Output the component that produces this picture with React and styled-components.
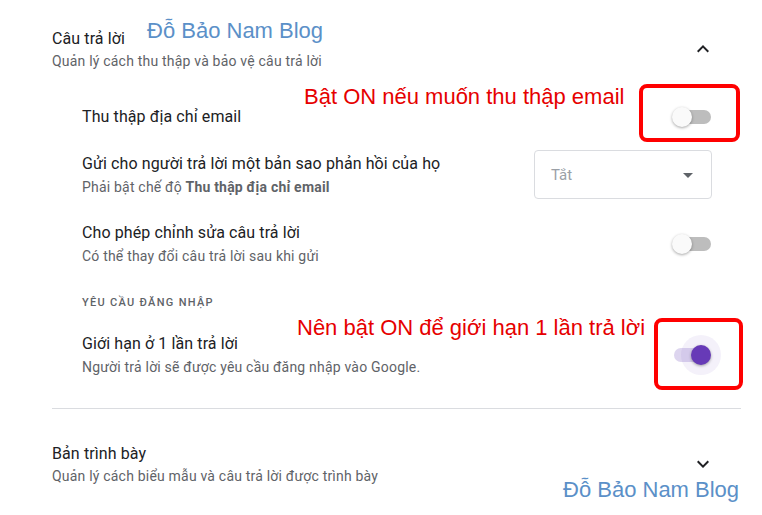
import React from 'react';
import styled, { createGlobalStyle } from 'styled-components';

const GlobalStyle = createGlobalStyle`
  html, body {
    margin: 0;
    padding: 0;
    background: #ffffff;
  }
  body {
    font-family: Roboto, "Noto Sans", Arial, sans-serif;
    color: #202124;
  }
`;

const Page = styled.div`
  position: relative;
  width: 762px;
  height: 515px;
  overflow: hidden;
  background: #ffffff;
`;

const Section = styled.div`
  margin-left: 52px;
  width: 689px;
  padding-top: ${props => props.$padTop}px;
  border-bottom: ${props => props.$divider ? '1px solid #dadce0' : 'none'};
  padding-bottom: ${props => props.$padBottom || 0}px;
`;

const SectionHeader = styled.div`
  display: flex;
  align-items: center;
  justify-content: space-between;
`;

const HeaderText = styled.div`
  display: flex;
  flex-direction: column;
`;

const SectionTitle = styled.div`
  font-size: 16px;
  line-height: 24px;
  letter-spacing: 0.1px;
  color: #202124;
`;

const SectionSub = styled.div`
  font-size: 14px;
  line-height: 20px;
  letter-spacing: 0.2px;
  color: #5f6368;
`;

const ChevronButton = styled.div`
  width: 24px;
  height: 24px;
  margin-right: 26px;
  display: flex;
  align-items: center;
  justify-content: center;
  color: #202124;
`;

const Rows = styled.div`
  margin-left: 30px;
  padding-right: 29px;
  display: flex;
  flex-direction: column;
`;

const Row = styled.div`
  display: flex;
  align-items: center;
  justify-content: space-between;
  min-height: ${props => props.$height}px;
  margin-top: ${props => props.$mt}px;
`;

const RowText = styled.div`
  display: flex;
  flex-direction: column;
`;

const RowTitle = styled.div`
  font-size: 16px;
  line-height: 24px;
  letter-spacing: 0.1px;
  color: #202124;
`;

const RowSub = styled.div`
  font-size: 14px;
  line-height: 20px;
  margin-top: 1px;
  letter-spacing: 0.2px;
  color: #5f6368;

  b {
    font-weight: 700;
    color: #5f6368;
  }
`;

const GroupLabel = styled.div`
  margin-top: ${props => props.$mt}px;
  font-size: 11px;
  line-height: 16px;
  font-weight: 500;
  letter-spacing: 1.3px;
  text-transform: uppercase;
  color: #5f6368;
`;

const Select = styled.div`
  box-sizing: border-box;
  width: 178px;
  height: 49px;
  border: 1px solid #dadce0;
  border-radius: 4px;
  display: flex;
  align-items: center;
  justify-content: space-between;
  padding: 0 18px 0 16px;
  font-size: 15px;
  color: #9aa0a6;
`;

const Caret = styled.span`
  width: 0;
  height: 0;
  border-left: 5px solid transparent;
  border-right: 5px solid transparent;
  border-top: 5px solid #5f6368;
  margin-top: 2px;
`;

const ToggleCell = styled.div`
  position: relative;
  width: 40px;
  height: 40px;
  display: flex;
  align-items: center;
`;

const Track = styled.div`
  position: absolute;
  left: ${props => props.$on ? 2 : 3}px;
  top: 13px;
  width: ${props => props.$on ? 35 : 36}px;
  height: 14px;
  border-radius: 7px;
  background: ${props => props.$on ? '#ddd5ef' : '#bdbdbd'};
`;

const Halo = styled.div`
  position: absolute;
  left: 9px;
  top: 0;
  width: 40px;
  height: 40px;
  border-radius: 50%;
  background: rgba(103, 58, 183, 0.07);
`;

const Thumb = styled.div`
  position: absolute;
  left: ${props => props.$on ? 19 : 0}px;
  top: 10px;
  width: 20px;
  height: 20px;
  border-radius: 50%;
  background: ${props => props.$on ? '#673ab7' : '#fafafa'};
  box-shadow: 0 1px 3px rgba(0, 0, 0, 0.35);
`;

const Highlight = styled.div`
  position: absolute;
  box-sizing: border-box;
  border: 4px solid #ff0000;
  border-radius: 8px;
  pointer-events: none;
`;

const Annotation = styled.div`
  position: absolute;
  font-family: "Liberation Sans", Arial, sans-serif;
  font-size: 22px;
  line-height: 26px;
  color: ${props => props.$blue ? '#5b90c8' : '#e60000'};
  white-space: nowrap;
`;

const Chevron = ({ up }) => (
  <svg width="24" height="24" viewBox="0 0 24 24" fill="currentColor">
    {up ? (
      <path d="M12 8l-6 6 1.41 1.41L12 10.83l4.59 4.58L18 14z" />
    ) : (
      <path d="M16.59 8.59L12 13.17 7.41 8.59 6 10l6 6 6-6z" />
    )}
  </svg>
);

const Toggle = ({ on, box }) => (
  <ToggleCell>
    <Track $on={on} />
    {on && <Halo />}
    <Thumb $on={on} />
    {box && (
      <Highlight
        style={{ left: box.left, top: box.top, width: box.width, height: box.height }}
      />
    )}
  </ToggleCell>
);

export default function App() {
  return (
    <Page>
      <GlobalStyle />

      <Section $padTop={27} $divider $padBottom={31}>
        <SectionHeader>
          <HeaderText>
            <SectionTitle>Câu trả lời</SectionTitle>
            <SectionSub>Quản lý cách thu thập và bảo vệ câu trả lời</SectionSub>
          </HeaderText>
          <ChevronButton>
            <Chevron up />
          </ChevronButton>
        </SectionHeader>

        <Rows>
          <Row $height={40} $mt={26}>
            <RowTitle>Thu thập địa chỉ email</RowTitle>
            <Toggle on={false} box={{ left: -33, top: -13, width: 101, height: 58 }} />
          </Row>

          <Row $height={49} $mt={13}>
            <RowText>
              <RowTitle>Gửi cho người trả lời một bản sao phản hồi của họ</RowTitle>
              <RowSub>
                Phải bật chế độ <b>Thu thập địa chỉ email</b>
              </RowSub>
            </RowText>
            <Select>
              Tắt
              <Caret />
            </Select>
          </Row>

          <Row $height={45} $mt={22}>
            <RowText>
              <RowTitle>Cho phép chỉnh sửa câu trả lời</RowTitle>
              <RowSub>Có thể thay đổi câu trả lời sau khi gửi</RowSub>
            </RowText>
            <Toggle on={false} />
          </Row>

          <GroupLabel $mt={29}>Yêu cầu đăng nhập</GroupLabel>

          <Row $height={45} $mt={21}>
            <RowText>
              <RowTitle>Giới hạn ở 1 lần trả lời</RowTitle>
              <RowSub>Người trả lời sẽ được yêu cầu đăng nhập vào Google.</RowSub>
            </RowText>
            <Toggle on box={{ left: -18, top: -17, width: 89, height: 72 }} />
          </Row>
        </Rows>
      </Section>

      <Section $padTop={33}>
        <SectionHeader>
          <HeaderText>
            <SectionTitle>Bản trình bày</SectionTitle>
            <SectionSub>Quản lý cách biểu mẫu và câu trả lời được trình bày</SectionSub>
          </HeaderText>
          <ChevronButton>
            <Chevron />
          </ChevronButton>
        </SectionHeader>
      </Section>

      <Annotation $blue style={{ left: 147, top: 18 }}>Đỗ Bảo Nam Blog</Annotation>
      <Annotation style={{ left: 304, top: 84 }}>Bật ON nếu muốn thu thập email</Annotation>
      <Annotation style={{ left: 297, top: 315 }}>Nên bật ON để giới hạn 1 lần trả lời</Annotation>
      <Annotation $blue style={{ left: 563, top: 477 }}>Đỗ Bảo Nam Blog</Annotation>
    </Page>
  );
}
